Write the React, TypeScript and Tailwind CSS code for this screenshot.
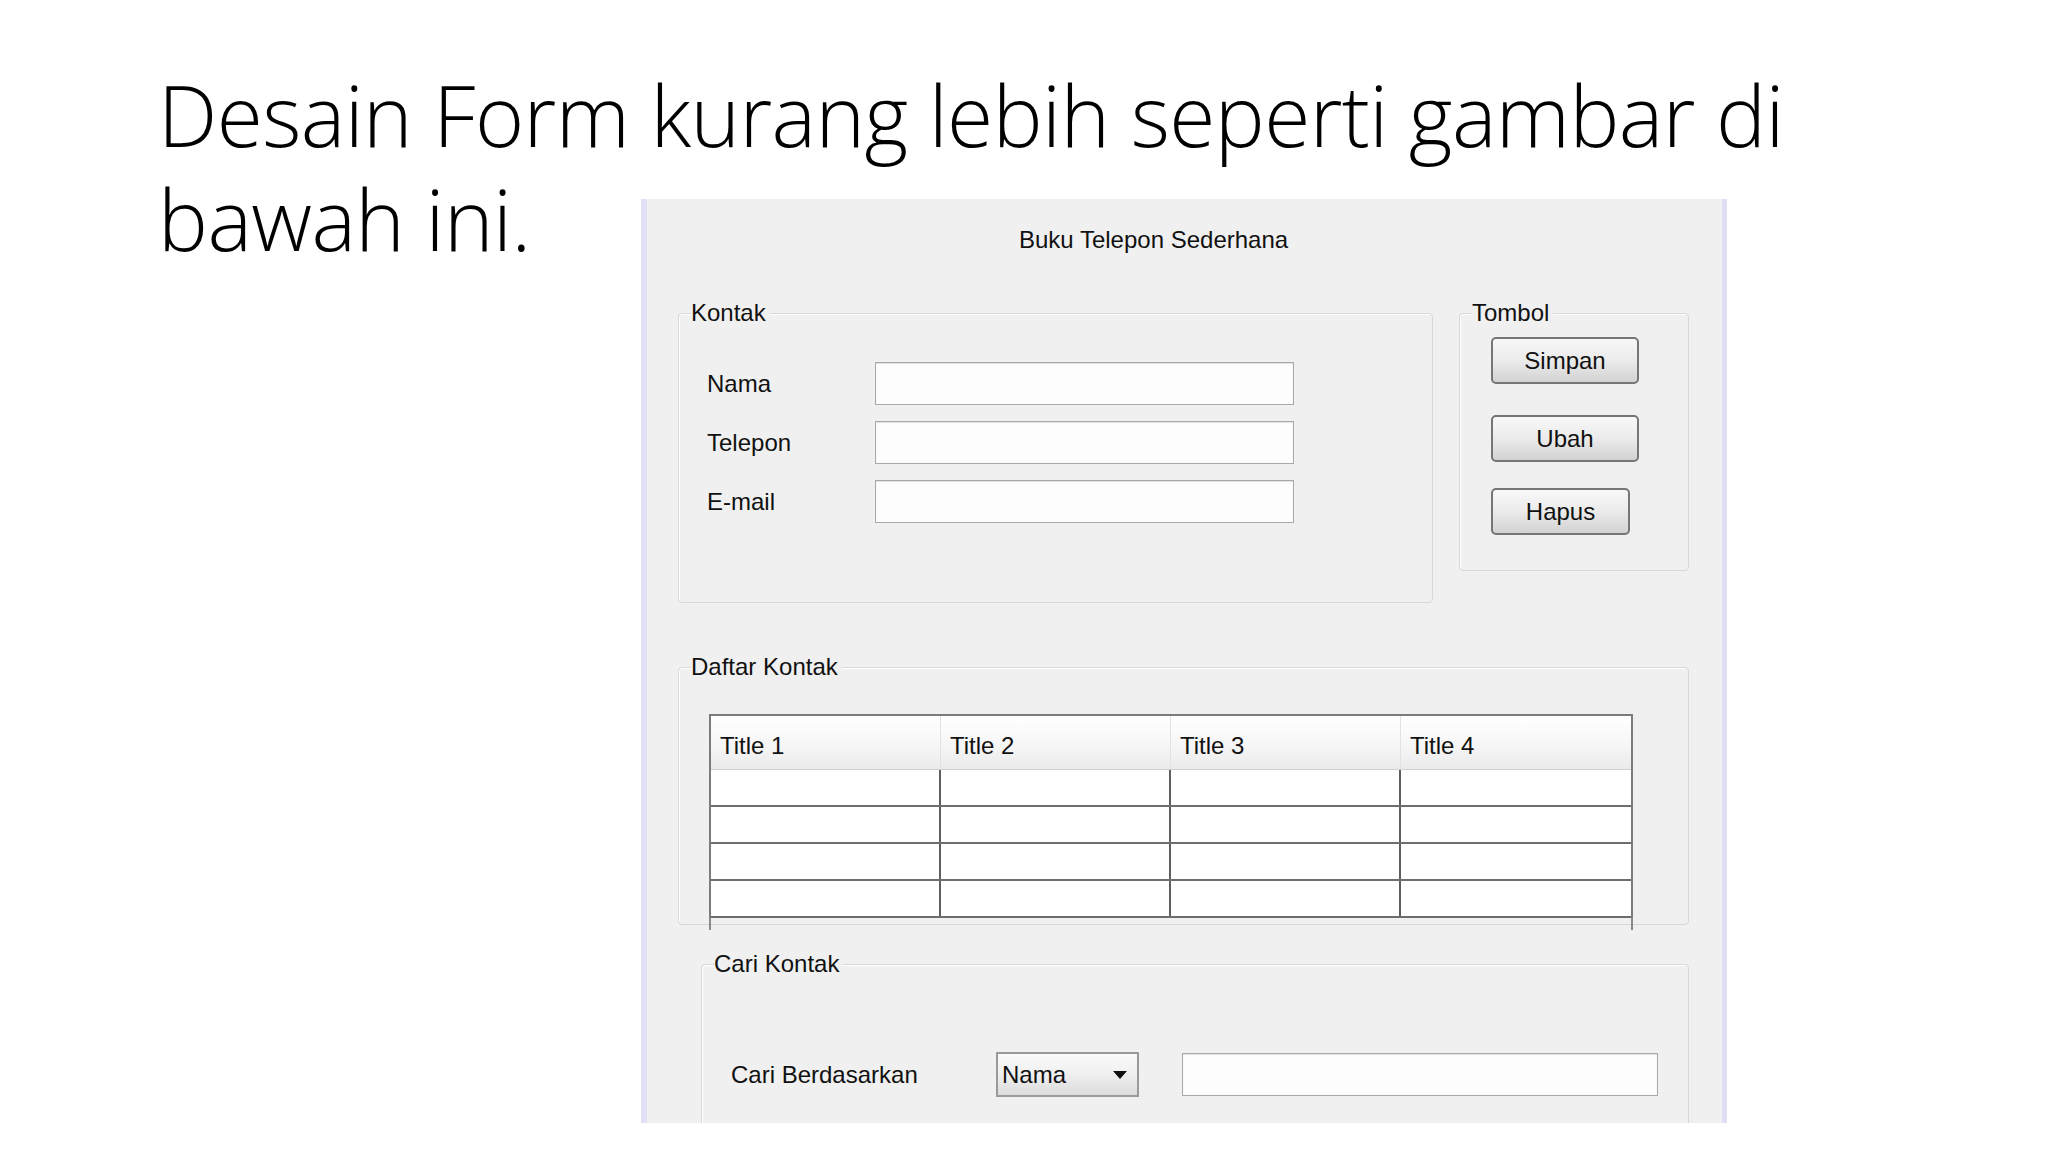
import React from "react";

const ui = { fontFamily: '"Liberation Sans", Arial, sans-serif' };

function Group({
  label,
  className,
  children,
}: {
  label: string;
  className: string;
  children?: React.ReactNode;
}) {
  return (
    <div className={`rounded-[4px] border border-[#d6d8dc] shadow-[inset_1px_1px_0_#ffffff] ${className}`}>
      <div className="-mt-[15px] ml-[12px] w-fit bg-[#f0f0f0] pr-[4px] text-[24px] leading-[28px] text-[#111]">
        {label}
      </div>
      {children}
    </div>
  );
}

function TextBox({ className = "" }: { className?: string }) {
  return (
    <div
      className={`h-[43px] border border-[#a7a9ad] bg-[#fdfdfd] shadow-[inset_0_1px_1px_rgba(0,0,0,0.12)] ${className}`}
    />
  );
}

function Btn({ label, w, className = "" }: { label: string; w: string; className?: string }) {
  return (
    <div
      className={`flex h-[47px] ${w} items-center justify-center rounded-[5px] border-2 border-[#767676] bg-gradient-to-b from-[#f8f8f8] via-[#ebebeb] to-[#d2d2d2] text-[24px] text-[#111] ${className}`}
    >
      {label}
    </div>
  );
}

export default function App() {
  const rows = [0, 1, 2, 3];
  return (
    <div className="relative h-[1152px] w-[2048px] overflow-hidden bg-white">
      <div
        className="pl-[158px] pt-[63px] text-[84px] font-light leading-[104px] tracking-[-0.6px] text-black"
        style={{ fontFamily: '"Open Sans", "Noto Sans", sans-serif' }}
      >
        <div className="h-[104px]">Desain Form kurang lebih seperti gambar di</div>
        <div className="h-[104px]">bawah ini.</div>
      </div>

      {/* screenshot of the Swing form placed on the slide */}
      <div
        className="absolute left-[641px] top-[199px] h-[924px] w-[1086px] overflow-hidden border-l-[6px] border-r-[5px] border-l-[#e0e0f7] border-r-[#dedef6] bg-[#f0f0f0]"
        style={ui}
      >
        <div className="pl-[372px] pt-[27px] text-[24px] leading-[28px] text-[#111]">
          Buku Telepon Sederhana
        </div>

        <div className="mt-[59px] flex items-start pl-[31px]">
          <Group label="Kontak" className="h-[290px] w-[755px]">
            <div className="flex flex-col gap-[16px] pl-[28px] pt-[35px]">
              {["Nama", "Telepon", "E-mail"].map((l) => (
                <div key={l} className="flex h-[43px] items-center">
                  <div className="w-[168px] text-[24px] text-[#111]">{l}</div>
                  <TextBox className="w-[419px]" />
                </div>
              ))}
            </div>
          </Group>
          <Group label="Tombol" className="ml-[26px] h-[258px] w-[230px]">
            <div className="flex flex-col pl-[31px] pt-[10px]">
              <Btn label="Simpan" w="w-[148px]" />
              <Btn label="Ubah" w="w-[148px]" className="mt-[31px]" />
              <Btn label="Hapus" w="w-[139px]" className="mt-[26px]" />
            </div>
          </Group>
        </div>

        <div className="mt-[64px] pl-[31px]">
          <Group label="Daftar Kontak" className="h-[258px] w-[1011px]">
            <div className="ml-[30px] mt-[33px] w-[924px]">
              <div className="border-l-2 border-r-2 border-t-2 border-[#7b7b7b]">
                <div className="grid h-[54px] grid-cols-4 border-b border-[#cfcfcf] bg-gradient-to-b from-[#ffffff] via-[#f7f7f7] to-[#ebebeb]">
                  {["Title 1", "Title 2", "Title 3", "Title 4"].map((t, i) => (
                    <div
                      key={t}
                      className={`flex items-center pl-[9px] pt-[6px] text-[24px] text-[#111] ${i < 3 ? "border-r border-[#e2e2e2]" : ""}`}
                    >
                      {t}
                    </div>
                  ))}
                </div>
                {rows.map((r) => (
                  <div key={r} className="grid h-[37px] grid-cols-4 border-b-2 border-[#6e6e6e] bg-white">
                    {[0, 1, 2, 3].map((c) => (
                      <div key={c} className={c < 3 ? "border-r-2 border-[#5f5f5f]" : ""} />
                    ))}
                  </div>
                ))}
              </div>
              <div className="h-[12px] border-l-2 border-r-2 border-[#8a8a8a]" />
            </div>
          </Group>
        </div>

        <div className="mt-[39px] pl-[54px]">
          <Group label="Cari Kontak" className="h-[220px] w-[988px]">
            <div className="flex items-center pl-[29px] pt-[74px]">
              <div className="w-[265px] text-[24px] text-[#111]">Cari Berdasarkan</div>
              <div className="flex h-[45px] w-[143px] items-center justify-between border-2 border-[#9a9a9a] bg-gradient-to-b from-[#fafafa] via-[#efefef] to-[#dcdcdc] pl-[4px] pr-[10px] text-[24px] text-[#111]">
                <span>Nama</span>
                <svg width="14" height="10" viewBox="0 0 14 10">
                  <path d="M0 1 L14 1 L7 9 Z" fill="#111" />
                </svg>
              </div>
              <TextBox className="ml-[43px] w-[476px]" />
            </div>
          </Group>
        </div>
      </div>
    </div>
  );
}
